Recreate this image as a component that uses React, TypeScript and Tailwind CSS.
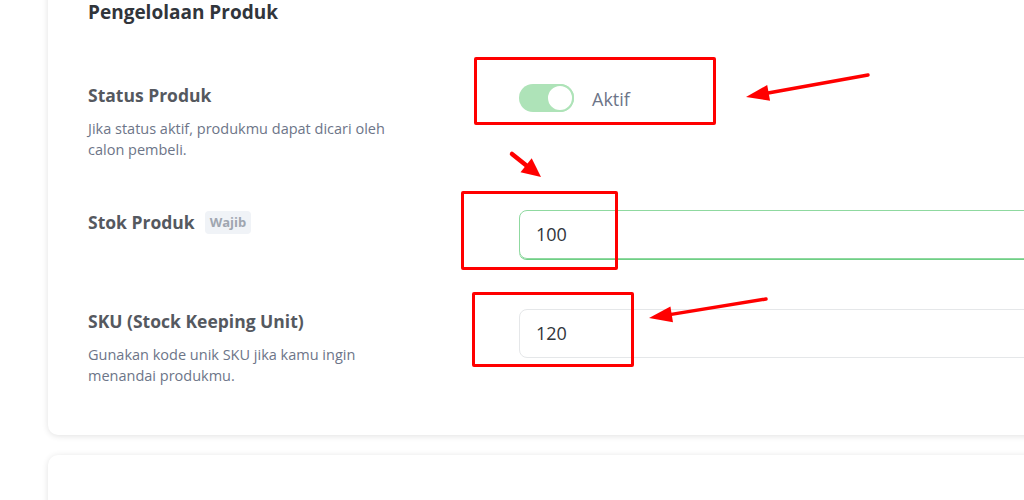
import React from "react";

type Pt = [number, number];

function Arrow({ tail, tip, w, headLen, headHalf }: { tail: Pt; tip: Pt; w: number; headLen: number; headHalf: number }) {
  const dx = tip[0] - tail[0];
  const dy = tip[1] - tail[1];
  const len = Math.hypot(dx, dy);
  const ux = dx / len;
  const uy = dy / len;
  const bx = tip[0] - ux * headLen;
  const by = tip[1] - uy * headLen;
  const nx = -uy;
  const ny = ux;
  const p1: Pt = [bx + nx * headHalf, by + ny * headHalf];
  const p2: Pt = [bx - nx * headHalf, by - ny * headHalf];
  const lx = tip[0] - ux * (headLen - 2);
  const ly = tip[1] - uy * (headLen - 2);
  return (
    <g>
      <line x1={tail[0]} y1={tail[1]} x2={lx} y2={ly} stroke="#ff0000" strokeWidth={w} strokeLinecap="round" />
      <polygon points={`${tip[0]},${tip[1]} ${p1[0]},${p1[1]} ${p2[0]},${p2[1]}`} fill="#ff0000" />
    </g>
  );
}

export default function App() {
  const label = "text-[17.5px] leading-[24px] font-bold text-[#55595f] [font-family:'Open_Sans',sans-serif]";
  const desc = "mt-[11px] text-[14.5px] leading-[21px] text-[#6d7588] [font-family:'Open_Sans',sans-serif]";
  return (
    <div className="relative w-[1024px] h-[500px] overflow-hidden bg-white">
      <div className="flex flex-col gap-[20px] pl-[48px] -mt-[30px]">
        {/* Card */}
        <div className="rounded-[10px] bg-white shadow-[0_1px_6px_rgba(0,0,0,0.12)] pl-[40px] pt-[30px] pb-[49px] w-[1010px]">
          <div className="text-[19px] leading-[24px] font-bold text-[#31353b] [font-family:'Open_Sans',sans-serif]">
            Pengelolaan Produk
          </div>

          <div className="flex flex-col gap-[50px] mt-[59px]">
            {/* Status */}
            <div className="flex">
              <div className="w-[431px] shrink-0">
                <div className={label}>Status Produk</div>
                <div className={desc}>
                  Jika status aktif, produkmu dapat dicari oleh
                  <br />
                  calon pembeli.
                </div>
              </div>
              <div className="flex items-start gap-[18px] pt-[1px]">
                <div className="relative w-[55px] h-[28px] rounded-full bg-[#aee3b8]">
                  <div className="absolute right-0 top-0 w-[28px] h-[28px] rounded-full bg-white border-[2px] border-[#aee3b8]" />
                </div>
                <div className="text-[18px] leading-[28px] text-[#6d7588] [font-family:'Open_Sans',sans-serif] pt-[1px]">Aktif</div>
              </div>
            </div>

            {/* Stok */}
            <div className="flex">
              <div className="w-[431px] shrink-0 flex items-start gap-[10px]">
                <div className={label}>Stok Produk</div>
                <div className="mt-[1px] h-[23px] px-[5px] rounded-[4px] bg-[#f0f3f7] text-[13px] leading-[23px] font-bold text-[#9fa6b0] [font-family:'Open_Sans',sans-serif]">
                  Wajib
                </div>
              </div>
              <div className="flex-1 h-[49px] rounded-[8px] border border-[#8fd9a0] shadow-[0_1px_0_#6fcf85] flex items-center px-[16px] text-[18px] text-[#31353b] [font-family:'Open_Sans',sans-serif]">
                100
              </div>
            </div>

            {/* SKU */}
            <div className="flex">
              <div className="w-[431px] shrink-0">
                <div className={label}>SKU (Stock Keeping Unit)</div>
                <div className={desc}>
                  Gunakan kode unik SKU jika kamu ingin
                  <br />
                  menandai produkmu.
                </div>
              </div>
              <div className="flex-1 h-[49px] rounded-[8px] border border-[#e5e7e9] flex items-center px-[16px] text-[18px] text-[#31353b] [font-family:'Open_Sans',sans-serif]">
                120
              </div>
            </div>
          </div>
        </div>

        {/* Second card */}
        <div className="rounded-[10px] bg-white shadow-[0_1px_6px_rgba(0,0,0,0.12)] h-[200px] w-[1010px]" />
      </div>

      {/* Annotations */}
      <div className="absolute left-[474px] top-[57px] w-[242px] h-[68px] border-[3px] border-[#ff0000] rounded-[2px]" />
      <div className="absolute left-[461px] top-[191px] w-[157px] h-[79px] border-[3px] border-[#ff0000] rounded-[2px]" />
      <div className="absolute left-[472px] top-[292px] w-[162px] h-[75px] border-[3px] border-[#ff0000] rounded-[2px]" />
      <svg className="absolute left-0 top-0 pointer-events-none" width="1024" height="500">
        <Arrow tail={[868, 75]} tip={[746, 97]} w={3.5} headLen={23} headHalf={8} />
        <Arrow tail={[512, 154]} tip={[541, 177]} w={4.5} headLen={19} headHalf={9} />
        <Arrow tail={[766, 299]} tip={[649, 318]} w={3.5} headLen={23} headHalf={8} />
      </svg>
    </div>
  );
}
